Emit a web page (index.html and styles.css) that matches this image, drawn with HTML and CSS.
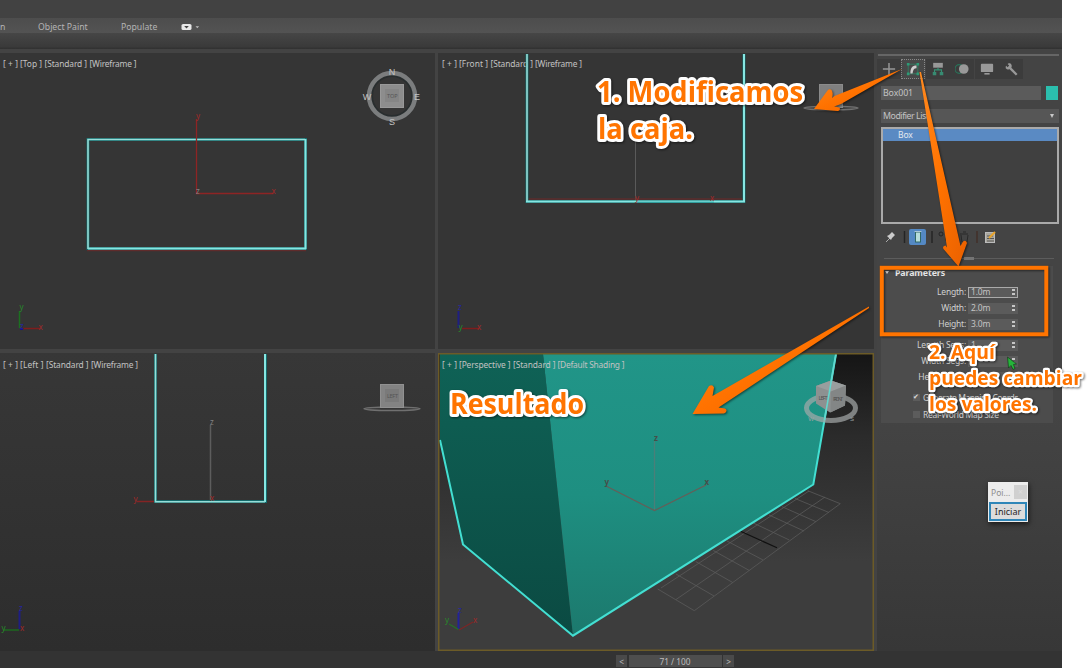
FILE: index.html
```html
<!DOCTYPE html>
<html lang="es">
<head>
<meta charset="utf-8">
<title>Modificar caja</title>
<link rel="stylesheet" href="styles.css">
</head>
<body>
<div class="app">
  <header class="titlebar"></header>
  <nav class="ribbon">
    <span class="ribbon-cut">n</span><span class="ribbon-paint">Object Paint</span><span class="ribbon-populate">Populate</span>
    <svg class="ribbon-toggle" width="20" height="8" viewBox="0 0 20 8"><rect x="0.5" y="1" width="10" height="6" rx="1.6" fill="#e8e8e8"/><path d="M3.2 3h4.6L5.500 5.500z" fill="#444"/><path d="M14.500 3.300h3.600l-1.800 2z" fill="#bbb"/></svg>
  </nav>
  <div class="strip"></div>
  <main class="workspace">
    <div class="viewports">
      <section class="viewport">
        <svg width="435" height="296" viewBox="0 53 435 296">
          <g class="vp-label"><text x="3" y="67" textLength="15">[+]</text><text x="20" y="67" textLength="22">[Top ]</text><text x="44.500" y="67" textLength="42.500">[Standard ]</text><text x="89.500" y="67" textLength="47">[Wireframe ]</text></g>
          <circle cx="392" cy="96" r="21.500" fill="none" stroke="#292e2f" stroke-width="5"/>
          <circle cx="392" cy="96" r="23" fill="none" stroke="#7b7d7e" stroke-width="4.500"/>
          <rect x="380.500" y="84.500" width="23" height="23" fill="#8d8d8d" stroke="#999"/>
          <rect x="385" y="89" width="14" height="13" fill="#858585"/>
          <text class="cube-text" x="387" y="98.200" textLength="10.500">TOP</text>
          <g class="compass"><text x="392" y="74.500">N</text><text x="392" y="124.500">S</text><text x="367" y="99.700">W</text><text x="417" y="99.700">E</text></g>
          <path d="M87 250.700h219" stroke="#6b2929"/>
          <rect x="88" y="139.500" width="217.500" height="109" class="wire-glow"/>
          <path d="M305.500 139v110M88 248.500h218" class="wire"/>
          <path d="M88 249V139.500h217" class="wire-thin"/>
          <path d="M196.500 119v74.500h77" class="axis-red"/>
          <text class="axis red" x="196" y="119">y</text><text class="axis red" x="271.500" y="194">x</text><text class="axis gray" x="196" y="194">z</text>
          <path d="M19.500 311v17" stroke="#1c7020" stroke-width="1.500"/><path d="M23 328.500h17" stroke="#7e1d1d" stroke-width="1.500"/><path d="M20 329h3" stroke="#14148c" stroke-width="2"/>
          <text class="axis green" x="19.500" y="310">y</text><text class="axis red" x="38.500" y="330">x</text><text class="axis blue" x="20" y="329">z</text>
        </svg>
      </section>
      <section class="viewport">
        <svg width="436" height="296" viewBox="438 53 436 296">
          <g class="vp-label"><text x="442" y="67" textLength="15">[+]</text><text x="459" y="67" textLength="29">[Front ]</text><text x="490.500" y="67" textLength="42.500">[Standard ]</text><text x="535" y="67" textLength="47">[Wireframe ]</text></g>
          <ellipse cx="831" cy="108" rx="27" ry="1.800" fill="none" stroke="#707070" stroke-width="1.500"/>
          <rect x="819.500" y="84.500" width="23" height="23" fill="#808080" stroke="#8b8b8b"/>
          <path d="M635.500 120v81" stroke="#5a5a5a"/>
          <path d="M527 199h217" stroke="#712929"/>
          <path d="M527 54v147.500h217V54" class="wire-glow"/>
          <path d="M744 54v147.500H526" class="wire"/>
          <path d="M527 54v147" class="wire-thin"/>
          <path d="M636 202.200h78" stroke="#279b9c" stroke-width="1"/>
          <text class="axis red" x="635" y="201">y</text><text class="axis red" x="710" y="201">x</text>
          <path d="M458.500 311v17" stroke="#1e1e83" stroke-width="2"/><path d="M462 328.500h17" stroke="#7e1d1d" stroke-width="1.500"/>
          <text class="axis blue" x="458" y="310">z</text><text class="axis green" x="458.500" y="330">y</text><text class="axis red" x="477" y="330">x</text>
        </svg>
      </section>
      <section class="viewport lower">
        <svg width="435" height="298" viewBox="0 353 435 298">
          <g class="vp-label"><text x="3" y="367.500" textLength="15">[+]</text><text x="20" y="367.500" textLength="23.500">[Left ]</text><text x="46" y="367.500" textLength="42.500">[Standard ]</text><text x="91" y="367.500" textLength="47">[Wireframe ]</text></g>
          <ellipse cx="392" cy="408.700" rx="28" ry="1.800" fill="none" stroke="#707070" stroke-width="1.500"/>
          <rect x="380.500" y="384.500" width="23" height="23" fill="#838383" stroke="#919191"/>
          <rect x="385" y="389" width="14" height="13" fill="#7a7a7a"/>
          <text class="cube-text" x="387" y="398" textLength="11">LEFT</text>
          <path d="M210.500 425v76" stroke="#5d5d5d" stroke-width="1.500"/>
          <path d="M155.500 354v147.500h110V354" class="wire-glow"/>
          <path d="M265 354v148" class="wire"/>
          <path d="M155.500 354v147.700H265" class="wire-thin"/>
          <path d="M137 501.500h17" stroke="#842424" stroke-width="1.500"/>
          <text class="axis gray" x="210" y="425">z</text><text class="axis red" x="133.500" y="502">y</text><text class="axis red" x="210" y="501">x</text>
          <path d="M19.500 611v18" stroke="#1e1e83" stroke-width="2"/><path d="M4 630h15" stroke="#1c681f" stroke-width="1.500"/>
          <text class="axis blue" x="19" y="611">z</text><text class="axis green" x="1.500" y="631">y</text><text class="axis red" x="20" y="631">x</text>
        </svg>
      </section>
      <section class="viewport active">
        <svg width="436" height="298" viewBox="438 353 436 298">
          <defs>
            <linearGradient id="front" x1="0" y1="0" x2="0" y2="1"><stop offset="0" stop-color="#219588"/><stop offset=".5" stop-color="#1e8f81"/><stop offset="1" stop-color="#1c796d"/></linearGradient>
            <linearGradient id="side" x1="0" y1="0" x2="0" y2="1"><stop offset="0" stop-color="#0f6256"/><stop offset="1" stop-color="#0b4a42"/></linearGradient>
          </defs>
          <g stroke="#5a5a5a" stroke-width=".8" fill="none">
            <path d="M657.700 589L694.300 610.700L840.300 503.700L807.700 490.700M676 599.500L825 497M661 588L809 491"/>
            <path d="M714 596l-38-22M732.700 582.500l-37-21M749.300 570.500l-36-20M763 560l-36-19M789.300 540l-36-17M804 531l-35-16M816 521.700l-34-15M829 512.500l-34-14"/>
          </g>
          <path d="M740 531l37 16.800" stroke="#111" stroke-width="1.200"/>
          <path d="M440 354H543L573 636L463 544L440 440z" fill="url(#side)"/>
          <path d="M543 354H836L813.300 484.500L573 636z" fill="url(#front)"/>
          <path d="M440 440l23 104.500L573 635.700L813.300 484.500L836 354" fill="none" stroke="#43dfd2" stroke-width="2"/>
          <ellipse cx="831" cy="408" rx="24.500" ry="12.500" fill="none" stroke="#a5aaaa" stroke-opacity=".7" stroke-width="5"/>
          <path d="M816 386l15-5.500 15 5-1 20-15 7-14-9z" fill="#8d9191"/><path d="M816 386l15-5.500 15 5-15 6z" fill="#9a9e9e"/><path d="M831 391.500l15-6-1 20-14.500 7z" fill="#838686"/>
          <text class="cube-text" x="818.500" y="400" textLength="9">LEFT</text><text class="cube-text" x="833" y="401" textLength="10">FRONT</text>
          <path d="M824.500 420L836 354" stroke="#64d7ce" stroke-width="1.500"/>
          <g class="compass small"><text x="811" y="421">W</text><text x="852" y="421">S</text></g>
          <g class="vp-label"><text x="442" y="367.500" textLength="15">[+]</text><text x="459" y="367.500" textLength="51.500">[Perspective ]</text><text x="513" y="367.500" textLength="42.500">[Standard ]</text><text x="557.500" y="367.500" textLength="67">[Default Shading ]</text></g>
          <path d="M654.500 441v69" stroke="#4a7f79" stroke-width="1.300"/><path d="M606 486l48.500 24.500L706 485" fill="none" stroke="#655f58" stroke-width="1.300"/>
          <text class="axis dark" x="654" y="441">z</text><text class="axis dark" x="604.500" y="485">y</text><text class="axis dark" x="704.500" y="485">x</text>
          <path d="M458.500 613v16" stroke="#22229a" stroke-width="2"/><path d="M449 624l9.500 5.500" stroke="#257127" stroke-width="1.300"/><path d="M459 630l14-8" stroke="#7d2626" stroke-width="1.300"/>
          <text class="axis blue" x="458" y="613">z</text><text class="axis green" x="445" y="623">y</text><text class="axis red" x="473" y="623">x</text>
          <rect x="438.750" y="353.750" width="434.500" height="296.500" fill="none" stroke="#6c5b27" stroke-width="1.500"/>
        </svg>
      </section>
    </div>
    <aside class="panel">
      <div class="grip"></div>
      <div class="tabs">
        <span class="tab"><svg width="16" height="16" viewBox="0 0 16 16"><path d="M8 1v14M1 8h14" stroke="#969696" stroke-width="1.700"/></svg></span>
        <span class="tab selected"><svg width="16" height="16" viewBox="0 0 16 16"><rect x="2.500" y="2.500" width="11" height="11" fill="none" stroke="#337c62"/><path d="M1 1h3v3H1zM12 1h3v3h-3zM1 12h3v3H1zM12 12h3v3h-3z" fill="#2d9b76"/><path d="M5 13C5 7 7 4 12 4v3C9 7 8 9 7.500 13z" fill="#cecece"/></svg></span>
        <span class="tab"><svg width="16" height="16" viewBox="0 0 16 16"><rect x="2.500" y="1" width="11" height="5.500" fill="#989898"/><path d="M8 6.500V9M4 12V9h8v3" fill="none" stroke="#369174" stroke-width="1.300"/><path d="M2 11.500h4V15H2zM10 11.500h4V15h-4z" fill="#378b72"/></svg></span>
        <span class="tab"><svg width="16" height="16" viewBox="0 0 16 16"><circle cx="5" cy="8" r="5" fill="none" stroke="#287359" stroke-width="1.300"/><circle cx="10" cy="8" r="5.500" fill="#999"/></svg></span>
        <span class="tab"><svg width="16" height="16" viewBox="0 0 16 16"><rect x="1" y="2" width="14" height="9.500" rx="1" fill="#999"/><path d="M5 13.500h6" stroke="#999" stroke-width="1.800"/></svg></span>
        <span class="tab"><svg width="16" height="16" viewBox="0 0 16 16"><path d="M14.500 14.500L7 7" stroke="#999" stroke-width="2.600"/><path d="M7 1.500C4 1 1.500 4 2 7c1.500 2 4.500 2 6 .2C9.500 5 9 3 7 1.500z" fill="#999"/><path d="M1 1l4 4" stroke="#3c3c3c" stroke-width="2.500"/></svg></span>
      </div>
      <div class="name-row"><span class="name-field">Box001</span><span class="swatch"></span></div>
      <div class="modifier-list"><span>Modifier List</span><span class="caret"></span></div>
      <div class="stack"><div class="stack-row">Box</div></div>
      <div class="stack-tools">
        <svg width="178" height="20" viewBox="881 227 178 20">
          <path d="M886 242l4-4" stroke="#aaa"/><path d="M887 236l2-1 3-3 3 3-3 3-1 2z" fill="#ccc"/>
          <path d="M904.500 231v12M932 231v12" stroke="#242424" stroke-width="1.500"/><path d="M977 231v12" stroke="#422f28" stroke-width="1.500"/>
          <rect x="909" y="229" width="17" height="16" rx="2" fill="#5489c4"/><rect x="915.500" y="232" width="5" height="10" fill="#b7dddb" stroke="#316866"/><path d="M914.500 231.500h7" stroke="#a9c4d6"/>
          <circle cx="941" cy="234" r="2" fill="none" stroke="#252525"/><circle cx="948" cy="239" r="2.500" fill="none" stroke="#252525"/><path d="M960 234h8M961 235l1 7h5l1-7M963 232h3" fill="none" stroke="#292929"/>
          <rect x="985.500" y="232.500" width="9" height="10" fill="#aaa79e" stroke="#bbb"/><path d="M987 236h6M987 238.500h7M987 241h7" stroke="#555"/><path d="M989 238l6-6" stroke="#e9a42c" stroke-width="2"/>
        </svg>
      </div>
      <div class="splitter"><i></i></div>
      <div class="rollout">
        <div class="rollout-title"><span class="tri"></span>Parameters</div>
        <div class="param"><label>Length:</label><span class="spin focus">1.0m<i></i></span></div>
        <div class="param"><label>Width:</label><span class="spin">2.0m<i></i></span></div>
        <div class="param"><label>Height:</label><span class="spin">3.0m<i></i></span></div>
        <div class="param segs"><label>Length Segs:</label><span class="spin">1<i></i></span></div>
        <div class="param"><label>Width Segs:</label><span class="spin">1<i></i></span></div>
        <div class="param"><label>Height Segs:</label><span class="spin">1<i></i></span></div>
        <div class="check"><span class="box">✔</span>Generate Mapping Coords.</div>
        <div class="check"><span class="box"></span>Real-World Map Size</div>
      </div>
    </aside>
  </main>
  <footer class="timeline"><span class="step">&lt;</span><span class="frames">71 / 100</span><span class="step">&gt;</span></footer>
</div>

<div class="mini-window">
  <div class="mini-title">Poi...<span class="mini-close">×</span></div>
  <div class="mini-button">Iniciar</div>
</div>

<svg class="notes" width="1091" height="668" viewBox="0 0 1091 668">
  <defs>
    <linearGradient id="ora" x1="0" y1="0" x2="1" y2="1"><stop offset="0" stop-color="#ff8a20"/><stop offset=".5" stop-color="#ff7200"/><stop offset="1" stop-color="#e96000"/></linearGradient>
  </defs>
  <path d="M1007.500 357l1 11 2.500-2.500 2 4 2-1-1.500-4 3-.5z" fill="#25b33a" stroke="#173b1b" stroke-width=".7"/>
  <g class="shadowed">
    <rect x="881.800" y="267.800" width="164.500" height="66.500" fill="none" stroke="#ff7400" stroke-width="4"/>
    <g fill="url(#ora)" stroke-linejoin="round">
      <path d="M902 69L834.500 96L832 98Q833.500 93 831.500 90Q829.500 88.300 827.500 90.500L814 109L837.500 111Q840.500 110.500 839.800 108Q839 107 834 106.500L841 104Z"/>
      <path d="M919.500 72L947 247.500L945.500 245.500Q942 246 943.500 249L958.500 266.500L967 243Q966 239.500 963 241.500L960.500 246L921 72Z"/>
      <path d="M869 306.500L712.500 396L714 387.500Q712.500 384 709 386L692.500 414L724 413.500Q728.500 411 725 408.500L718.500 407.500L869 308Z"/>
    </g>
  </g>
  <g class="note shadowed">
    <text x="597" y="101.500" font-size="29" textLength="206" lengthAdjust="spacingAndGlyphs">1. Modificamos</text>
    <text x="598" y="138.500" font-size="29" textLength="95" lengthAdjust="spacingAndGlyphs">la caja.</text>
    <text x="450" y="414" font-size="28.500" textLength="134" lengthAdjust="spacingAndGlyphs">Resultado</text>
    <g class="note-small">
      <text x="929" y="359" font-size="20" textLength="66" lengthAdjust="spacingAndGlyphs">2. Aquí</text>
      <text x="929" y="385" font-size="20" textLength="153" lengthAdjust="spacingAndGlyphs">puedes cambiar</text>
      <text x="929" y="411" font-size="20" textLength="108" lengthAdjust="spacingAndGlyphs">los valores.</text>
    </g>
  </g>
</svg>
</body>
</html>
```
FILE: styles.css
```css
* { box-sizing: border-box; }
body {
  margin: 0;
  width: 1091px;
  height: 668px;
  overflow: hidden;
  background: #fff;
  font-family: "Noto Sans", "Open Sans", sans-serif;
  position: relative;
}
svg { display: block; }
.app {
  width: 1062px;
  height: 668px;
  display: flex;
  flex-direction: column;
  background: #404040;
}
.titlebar { height: 18px; background: #424242; }
.ribbon {
  height: 15px;
  padding-top: 2px;
  display: flex;
  align-items: center;
  background: linear-gradient(#4d4d4d, #535353);
  color: #b4b4b4;
  font-size: 8.7px;
}
.ribbon-cut { width: 38px; }
.ribbon-paint { width: 83px; }
.ribbon-populate { width: 60px; }
.strip { height: 16px; background: linear-gradient(#464646, #3a3a3a 85%, #303030); }
.workspace {
  height: 602px;
  display: flex;
  gap: 3px;
  background: #434343;
}
.viewports {
  display: grid;
  grid-template-columns: 435px 436px;
  grid-template-rows: 296px 298px;
  gap: 4px 3px;
  padding-top: 4px;
}
.viewport { background: #353535; overflow: hidden; }
.viewport.lower { background: linear-gradient(#373737, #2d2d2d); }
.viewport.active { background: linear-gradient(#151515, #2b2b2b 28%, #3d3d3d 70%, #3d3d3d); }
.vp-label { font-size: 8.4px; fill: #c2c2c2; }
.cube-text { font-size: 5.5px; fill: #555; }
.compass text { font: 9px "Liberation Sans", sans-serif; fill: #c4c4c4; text-anchor: middle; }
.compass.small text { font-size: 6px; fill: #9da4a3; }
.axis { font-size: 8px; }
.red { fill: #a32929; }
.green { fill: #278a2b; }
.blue { fill: #2525a3; }
.gray { fill: #828282; }
.dark { fill: #474e49; font-weight: bold; }
.axis-red { fill: none; stroke: #8e2424; stroke-width: 1.3; }
.wire-glow { fill: none; stroke: #146a6b; stroke-width: 3; }
.wire { fill: none; stroke: #86e6e2; stroke-width: 2; }
.wire-thin { fill: none; stroke: #97ddd8; stroke-width: 1.6; }

.panel {
  width: 185px;
  padding: 5px 3px 0 4px;
  background: linear-gradient(#444 60%, #373737);
  color: #c3c3c3;
  font-size: 8.8px;
  letter-spacing: -0.1px;
}
.grip { height: 2px; margin-left: -3px; background: #666; }
.tabs { display: flex; height: 20px; margin: 3px 0 7px -4px; background: #444; gap: .4px; width: 146px; }
.tab { width: 24px; flex: none; display: flex; align-items: center; justify-content: center; background: #3c3c3c; }
.tab svg { width: 14px; height: 14px; flex: none; }
.tab.selected { background: #484848; border: 1px dotted #888; }
.name-row { display: flex; justify-content: space-between; height: 14px; padding-right: 1px; }
.name-field { width: 160px; padding-left: 2px; line-height: 14px; background: #5b5b5b; }
.swatch { width: 12px; height: 14px; background: #2bbfae; }
.modifier-list {
  height: 14px;
  margin-top: 9px;
  padding: 0 5px 0 2px;
  display: flex;
  align-items: center;
  justify-content: space-between;
  line-height: 13px;
  letter-spacing: -0.45px;
  background: #565656;
  white-space: nowrap;
}
.caret { border: 2.5px solid transparent; border-top: 4px solid #c8c8c8; border-bottom: 0; }
.stack { height: 97px; margin-top: 4px; border: 2px solid #aaa; background: #404040; }
.stack-row { height: 12px; padding-left: 15px; line-height: 12px; font-size: 8.5px; background: #5a8ac3; color: #e4e9ef; }
.stack-tools { height: 20px; margin-top: 3px; }
.splitter { height: 5px; margin: 9px 5px 0 3px; display: flex; align-items: center; justify-content: center; background: linear-gradient(#444 40%, #5c5c5c 40% 60%, #444 60%); }
.splitter i { width: 10px; height: 3px; background: #747474; }
.rollout { width: 172px; height: 157px; margin-top: 5px; background: #4c4c4c; }
.rollout-title { height: 13px; display: flex; align-items: center; font-size: 8.8px; font-weight: bold; color: #e6e6e6; }
.tri { margin: 0 6px 0 4px; border: 2.5px solid transparent; border-top: 3px solid #ccc; border-bottom: 0; }
.param { height: 10px; margin-top: 6px; display: flex; justify-content: flex-end; align-items: center; gap: 2px; padding-right: 35px; font-size: 8.5px; letter-spacing: -0.2px; line-height: 10px; white-space: nowrap; }
.rollout-title + .param { margin-top: 8px; }
.param.segs { margin-top: 11px; }
.param label { color: #d0d0d0; }
.spin { width: 50px; height: 11px; padding: 0 3px; display: flex; justify-content: space-between; align-items: center; background: #5b5b5b; }
.spin.focus { border: 1px solid #aaa; padding: 0 2px; }
.spin i { width: 3px; height: 6px; background: linear-gradient(#c6c6c6 38%, transparent 38% 62%, #c6c6c6 62%); }
.check { height: 12px; margin-top: 9px; padding-left: 32px; display: flex; align-items: center; gap: 3px; font-size: 8.5px; letter-spacing: -0.45px; white-space: nowrap; color: #d0d0d0; }
.check + .check { margin-top: 5px; letter-spacing: -0.3px; }
.box { width: 7px; height: 7px; font: 7px/7px "DejaVu Sans", sans-serif; background: #5c5c5c; color: #ddd; }

.timeline {
  height: 17px;
  padding: 4px 0 1px 616px;
  display: flex;
  gap: 1.5px;
  background: #333;
  color: #bcbcbc;
  font-size: 8.3px;
  line-height: 13px;
  text-align: center;
}
.step { width: 11px; background: #4a4a4a; }
.frames { width: 93px; background: #4e4e4e; }

/* Floating recorder window */
.mini-window {
  position: absolute;
  left: 988px;
  top: 482px;
  width: 40px;
  height: 40px;
  padding: 0 1px 1px;
  background: #ececec;
  box-shadow: 1px 2px 5px #0009;
}
.mini-title { height: 20px; padding-left: 2px; display: flex; align-items: center; justify-content: space-between; font-size: 8.5px; color: #8c8c8c; }
.mini-close { width: 13px; height: 14px; background: #d0d0d0; color: #ddd; text-align: center; line-height: 13px; }
.mini-button { height: 19px; border: 2px solid #2f86b8; background: #dcdcdc; color: #262626; font-size: 9px; line-height: 16px; text-align: center; }

/* Annotation layer over the whole capture */
.notes { position: absolute; left: 0; top: 0; }
.shadowed { filter: drop-shadow(1px 1px 1px #0008); }
.note text { font-family: "Open Sans", "Noto Sans", sans-serif; font-weight: bold; fill: #ff7400; stroke: #fff; stroke-width: 6px; stroke-linejoin: round; paint-order: stroke; }
.note .note-small text { stroke-width: 4.5px; }
```
